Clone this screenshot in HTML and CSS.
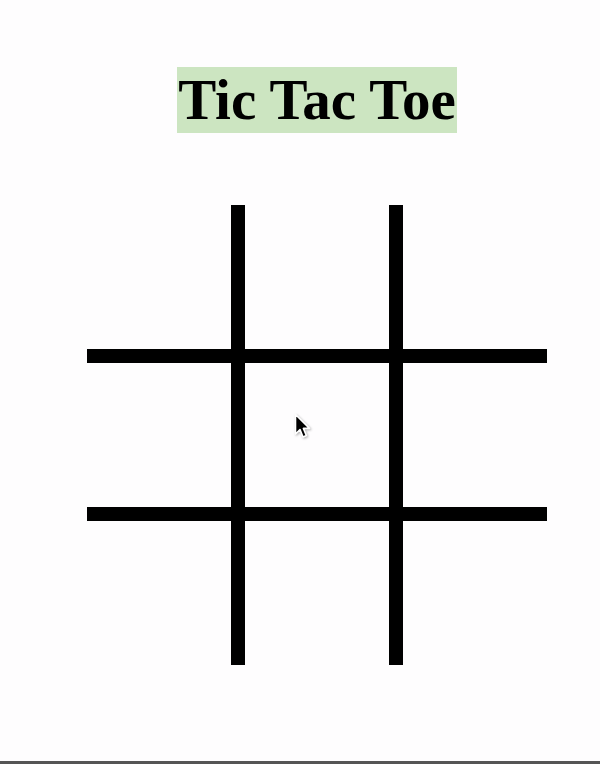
FILE: index.html
```html
<!DOCTYPE html>
<html lang="en">
<head>
  <meta charset="UTF-8" />
  <meta name="viewport" content="width=device-width, initial-scale=1.0" />
  <title>Tic Tac Toe</title>
  <link rel="stylesheet" href="styles.css">
</head>
<body>
  <div class="game">
    <h1 class="title">Tic Tac Toe</h1>
    <div id="board">
      <div class="cell"></div>
      <div class="cell"></div>
      <div class="cell"></div>
      <div class="cell"></div>
      <div class="cell">
        <svg class="cursor" width="18" height="28" viewBox="0 0 18 28">
          <path d="M1.5 1.5 L1.5 21 L6 16.6 L9 24 L12.4 22.6 L9.4 15.4 L15.5 15.4 Z" fill="#000" stroke="#fff" stroke-width="1.6" stroke-linejoin="round"/>
        </svg>
      </div>
      <div class="cell"></div>
      <div class="cell"></div>
      <div class="cell"></div>
      <div class="cell"></div>
    </div>
  </div>
</body>
</html>
```

FILE: styles.css
```css
html, body {
  margin: 0;
  background: #fefdfe;
}
body {
  min-height: 100vh;
  box-sizing: border-box;
  border-bottom: 3px solid #555;
  font-family: "Liberation Serif", "Times New Roman", serif;
}
.game {
  width: 460px;
  margin-left: 87px;
  padding-top: 67px;
  text-align: center;
}
.title {
  display: inline-block;
  margin: 0 0 72px;
  padding: 0 1px;
  background: #cce5c1;
  font-size: 57px;
  line-height: 66px;
  font-weight: bold;
  color: #000;
}
#board {
  display: grid;
  grid-template-columns: repeat(3, 144px);
  grid-template-rows: repeat(3, 144px);
  gap: 14px;
  background: #000;
}
.cell {
  background: #fefdfe;
  position: relative;
}
.cursor {
  position: absolute;
  left: 49px;
  top: 50px;
  filter: drop-shadow(1px 1px 1px rgba(0, 0, 0, 0.3));
}
```
